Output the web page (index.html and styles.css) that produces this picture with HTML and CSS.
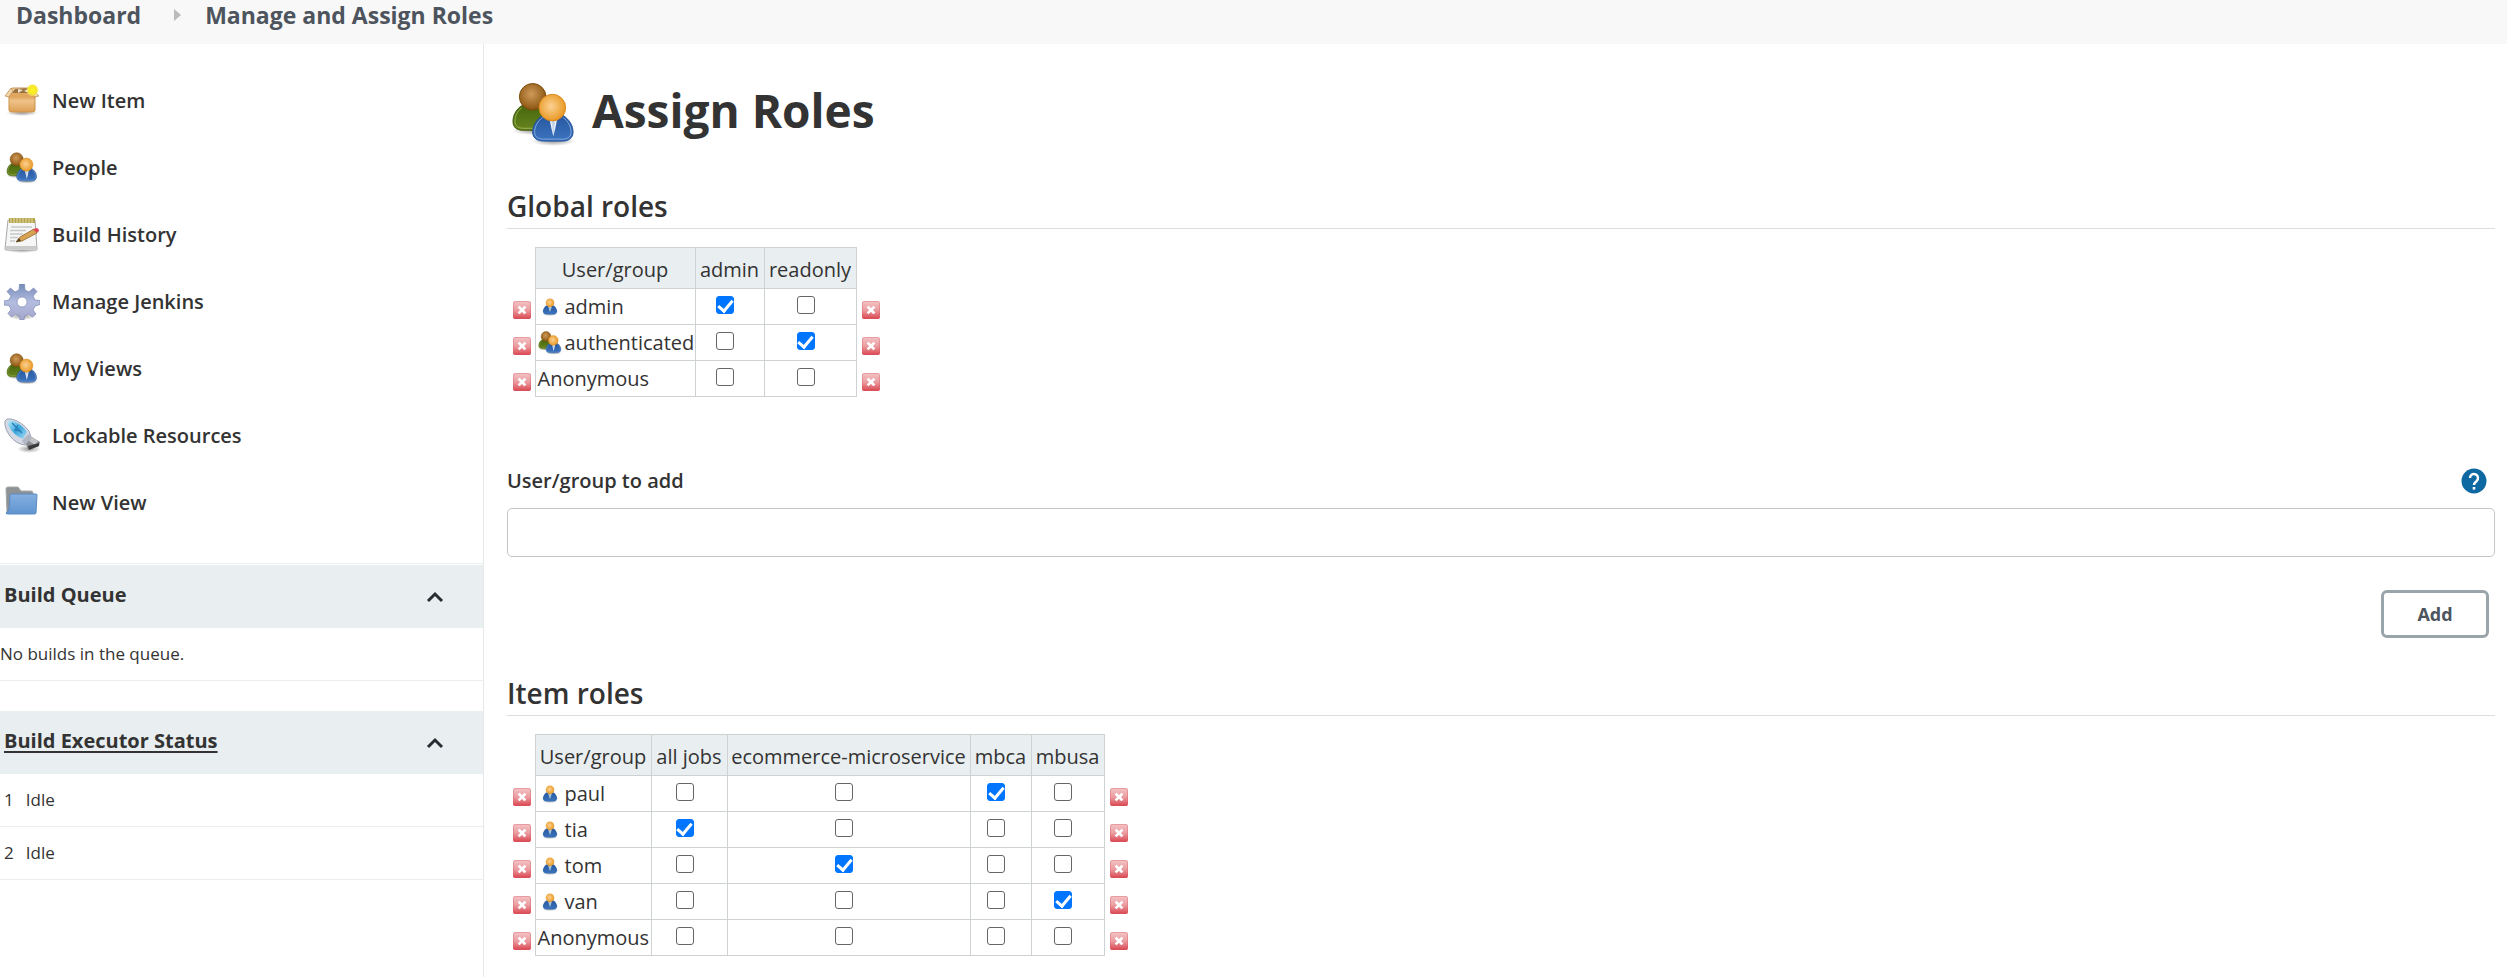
FILE: index.html
```html
<!DOCTYPE html>
<html lang="en">
<head>
<meta charset="utf-8">
<title>Assign Roles</title>
<meta name="viewport" content="width=device-width, initial-scale=1">
<link rel="stylesheet" href="styles.css">
</head>
<body>
<svg class="sprite" aria-hidden="true">
  <defs>
    <radialGradient id="g-brown" cx=".45" cy=".4" r=".6"><stop offset="0" stop-color="#cf9a58"/><stop offset="1" stop-color="#8a5410"/></radialGradient>
    <radialGradient id="g-orange" cx=".45" cy=".45" r=".6"><stop offset="0" stop-color="#fbd193"/><stop offset="1" stop-color="#e8941a"/></radialGradient>
    <linearGradient id="g-green" x1="0" y1="0" x2="0" y2="1"><stop offset="0" stop-color="#45660c"/><stop offset="1" stop-color="#67851f"/></linearGradient>
    <linearGradient id="g-blue" x1="0" y1="0" x2="0" y2="1"><stop offset="0" stop-color="#27589f"/><stop offset="1" stop-color="#3c74bf"/></linearGradient>
    <linearGradient id="g-red" x1="0" y1="0" x2="0" y2="1"><stop offset="0" stop-color="#f3c4c6"/><stop offset=".5" stop-color="#eb9da1"/><stop offset="1" stop-color="#da4550"/></linearGradient>
    <linearGradient id="g-box" x1="0" y1="0" x2="0" y2="1"><stop offset="0" stop-color="#d9a15c"/><stop offset=".35" stop-color="#efc288"/><stop offset="1" stop-color="#dc9f55"/></linearGradient>
    <linearGradient id="g-folder" x1="0" y1="0" x2="0" y2="1"><stop offset="0" stop-color="#85afe0"/><stop offset="1" stop-color="#5f94d0"/></linearGradient>
    <linearGradient id="g-gear" x1="0" y1="0" x2="0" y2="1"><stop offset="0" stop-color="#7389b8"/><stop offset=".5" stop-color="#b3bde0"/><stop offset="1" stop-color="#a5a5cc"/></linearGradient>
    <linearGradient id="g-usb" x1="0" y1="0" x2="1" y2="1"><stop offset="0" stop-color="#bcecf9"/><stop offset=".5" stop-color="#3ba6dc"/><stop offset="1" stop-color="#a9dcf3"/></linearGradient>
    <radialGradient id="g-shadow"><stop offset="0" stop-color="#000" stop-opacity=".4"/><stop offset="1" stop-color="#000" stop-opacity="0"/></radialGradient>
    <radialGradient id="g-glow"><stop offset="0" stop-color="#fff61e"/><stop offset=".7" stop-color="#f5e52e"/><stop offset="1" stop-color="#fff7a0" stop-opacity="0"/></radialGradient>
  </defs>
  <symbol id="i-people" viewBox="0 0 64 66">
    <ellipse cx="22" cy="49" rx="22" ry="5" fill="url(#g-shadow)"/>
    <path d="M10 24h23c6 6 8 12 8 18 0 5-5 7-10 7H11C5 49 1 46 1 40c0-7 4-13 9-16z" fill="url(#g-green)" stroke="#3d5909" stroke-width="1"/>
    <path d="M10 26c-5 4-7 9-7 14 0 5 4 7 8 7h12" fill="none" stroke="#9ab154" stroke-width="1"/>
    <circle cx="21" cy="15" r="13.5" fill="url(#g-brown)" stroke="#7c4b0c" stroke-width="1"/>
    <ellipse cx="42" cy="60" rx="22" ry="5" fill="url(#g-shadow)"/>
    <path d="M31 34h21c6 4 10 10 10 17 0 6-5 9-10 9H32c-6 0-11-3-11-9 0-7 4-13 10-17z" fill="url(#g-blue)" stroke="#1f4f96" stroke-width="1"/>
    <path d="M31 36c-5 4-8 9-8 15 0 5 4 7 9 7h20c5 0 8-3 8-7 0-6-3-11-8-15" fill="none" stroke="#82a9dd" stroke-width="1"/>
    <path d="M38 37h8l-2 10-2 8-2-8z" fill="#f1f5fc"/><path d="M40 39h4l-1 7-1 9-1-9z" fill="#c3d3ea"/>
    <circle cx="41" cy="26" r="13.5" fill="url(#g-orange)" stroke="#d8871a" stroke-width="1"/>
  </symbol>
  <symbol id="i-person" viewBox="0 0 32 38">
    <ellipse cx="16" cy="34" rx="16" ry="4" fill="url(#g-shadow)"/>
    <path d="M8 16h16c4 3 7 8 7 12s-3 7-7 7H8c-4 0-7-3-7-7s3-9 7-12z" fill="url(#g-blue)"/>
    <path d="M12 18h8l-4 12z" fill="#a9c4cf"/>
    <circle cx="16" cy="10" r="9" fill="url(#g-orange)"/>
  </symbol>
  <symbol id="i-box" viewBox="0 0 36 36">
    <ellipse cx="18" cy="30" rx="16" ry="3" fill="url(#g-shadow)"/>
    <path d="M8 5h20l4 6H4z" fill="#f0d2a0" stroke="#c8945a" stroke-width="1"/>
    <path d="M11 6l14-1 3 5H8z" fill="#9b7340"/><path d="M14 6l5 1-5 3zM20 8l4-2 1 4z" fill="#ece3d3"/>
    <path d="M5 12h26v15q0 2-3 2H8q-3 0-3-2z" fill="url(#g-box)" stroke="#cf9149" stroke-width="1"/>
    <path d="M4 10h28l-2 5H6z" fill="#e2a75f"/>
    <path d="M7 5L1 13l4 1 4-6zM28 6l7 7-4 1-4-5z" fill="#efd5a8" stroke="#b7874f" stroke-width=".7"/>
    <circle cx="28.500" cy="7" r="6.500" fill="url(#g-glow)"/>
  </symbol>
  <symbol id="i-notepad" viewBox="0 0 36 36">
    <ellipse cx="18" cy="33" rx="17" ry="3" fill="url(#g-shadow)"/>
    <path d="M4 3h27l2 29q0 1-1 1H2q-1 0-1-1z" fill="#f5f6f5" stroke="#a7aaa6" stroke-width="1"/>
    <path d="M2 29h30v3H2z" fill="#c9cbc8"/>
    <path d="M5 1h26v5H5z" fill="#b4a44e"/><path d="M7 1v5M10 1v5M13 1v5M16 1v5M19 1v5M22 1v5M25 1v5M28 1v5" stroke="#e2dba5" stroke-width="1"/>
    <path d="M7 10h21M6 13.500h16M6 17h13M6 20.500h8M6 24h5" stroke="#c5c7c9" stroke-width="1.300"/>
    <path d="M12 25l4-5 14-8 3 4-15 8z" fill="#d7a251" stroke="#93672c" stroke-width=".8"/>
    <path d="M12 25l3-4 2 3z" fill="#51422c"/><path d="M29 12.500l3-1.500q3 0 3 3l-2 2z" fill="#dc4b55"/>
  </symbol>
  <symbol id="i-gear" viewBox="0 0 36 36">
    <ellipse cx="18" cy="32" rx="14" ry="4" fill="url(#g-shadow)"/>
    <path fill="url(#g-gear)" stroke="#8490b9" stroke-width=".8" fill-rule="evenodd" d="M15.500 0h5l.5 6 4 2 4.500-4 3.500 3.500-4 4.500 2 4 5 .5v4l-5 1.500-2 4 3 4-3.500 3-4-3-4 2-.5 4h-4l-.5-4-4-2-4 3-3.500-3.500 3-4-2-4-5-.5v-4l5-1 2-4-4-4.500L6.500 4l4.500 4 4-2zM18 13a5 5 0 1 0 .1 0z"/>
  </symbol>
  <symbol id="i-usb" viewBox="0 0 36 36">
    <ellipse cx="25" cy="31" rx="12" ry="4" fill="url(#g-shadow)"/>
    <path d="M1 3q1-3 6-2 10 2 18 12l2 6-6 8q-9-1-15-9Q0 10 1 3z" fill="#d4d9e3" stroke="#9ba2b5" stroke-width="1"/>
    <path d="M5 2q11 2 18 12l-4 7Q9 17 4 7z" fill="url(#g-usb)"/>
    <path d="M8 5l10 10M14 7l-3 5 6 1" stroke="#247db8" stroke-width="1.300" fill="none"/>
    <path d="M18 23l6-7 4 3-6 9z" fill="#b3b7c4"/>
    <path d="M22 26l6-7 8 5-1 4-11 4z" fill="#8b8d92"/><path d="M25 23l3-4 6 4-3 4z" fill="#c3c5c8"/><path d="M24 28l11-3v3l-10 4z" fill="#3a3a3c"/>
  </symbol>
  <symbol id="i-folder" viewBox="0 0 36 36">
    <path d="M2 4q0-2 2-2h10l3 4h10q2 0 2 2v20H3z" fill="#8e9294" stroke="#a5a8a9" stroke-width="1"/>
    <path d="M6 10q0-1 1-1h25q1 0 1 1l-1 18q0 1-2 1H4q-2 0-2-1l3-3z" fill="url(#g-folder)" stroke="#5b8ac1" stroke-width="1"/>
  </symbol>
  <symbol id="i-delete" viewBox="0 0 18 18">
    <rect width="18" height="18" rx="2" fill="url(#g-red)"/><rect x=".5" y=".5" width="17" height="17" rx="2" fill="none" stroke="#d85a62" stroke-opacity=".35"/>
    <path d="M6.500 6.500l5 5M11.500 6.500l-5 5" stroke="#fff" stroke-width="2.600" stroke-linecap="square"/>
  </symbol>
  <symbol id="i-up" viewBox="0 0 18 12"><path d="M2 10l7-7 7 7" fill="none" stroke="#262d33" stroke-width="3"/></symbol>
</svg>

<nav class="breadcrumbs" aria-label="Breadcrumb">
  <a href="#">Dashboard</a>
  <svg class="crumb-arrow" viewBox="0 0 7 12" aria-hidden="true"><path d="M0 0l7 6-7 6z" fill="#b9bbbc"/></svg>
  <a href="#">Manage and Assign Roles</a>
</nav>

<div class="page">
  <aside class="side">
    <nav class="tasks" aria-label="Tasks">
      <a href="#"><svg class="task-icon"><use href="#i-box"/></svg>New Item</a>
      <a href="#"><svg class="task-icon people"><use href="#i-people"/></svg>People</a>
      <a href="#"><svg class="task-icon"><use href="#i-notepad"/></svg>Build History</a>
      <a href="#"><svg class="task-icon"><use href="#i-gear"/></svg>Manage Jenkins</a>
      <a href="#"><svg class="task-icon people"><use href="#i-people"/></svg>My Views</a>
      <a href="#"><svg class="task-icon"><use href="#i-usb"/></svg>Lockable Resources</a>
      <a href="#"><svg class="task-icon"><use href="#i-folder"/></svg>New View</a>
    </nav>
    <section class="pane queue">
      <header class="pane-head"><h2>Build Queue</h2><button class="collapse" aria-label="Collapse build queue"><svg><use href="#i-up"/></svg></button></header>
      <p class="pane-row">No builds in the queue.</p>
    </section>
    <section class="pane executors">
      <header class="pane-head"><h2><a href="#">Build Executor Status</a></h2><button class="collapse" aria-label="Collapse executor status"><svg><use href="#i-up"/></svg></button></header>
      <p class="pane-row"><span>1</span><span>Idle</span></p>
      <p class="pane-row"><span>2</span><span>Idle</span></p>
    </section>
  </aside>

  <main class="main">
    <h1><svg class="title-icon" aria-hidden="true"><use href="#i-people"/></svg><span>Assign Roles</span></h1>

    <h2 class="section-title">Global roles</h2>
    <table class="roles">
      <colgroup><col class="c-del"><col class="c-160"><col class="c-69"><col class="c-92"><col class="c-del"></colgroup>
      <thead><tr><td class="edge"></td><th>User/group</th><th>admin</th><th>readonly</th><td class="edge"></td></tr></thead>
      <tbody>
        <tr><td class="edge"><button class="del" aria-label="Remove admin"><svg><use href="#i-delete"/></svg></button></td><td><span class="who"><svg class="one"><use href="#i-person"/></svg>admin</span></td><td class="tick"><input type="checkbox" aria-label="admin: admin" checked></td><td class="tick"><input type="checkbox" aria-label="admin: readonly"></td><td class="edge"><button class="del" aria-label="Remove admin"><svg><use href="#i-delete"/></svg></button></td></tr>
        <tr><td class="edge"><button class="del" aria-label="Remove authenticated"><svg><use href="#i-delete"/></svg></button></td><td><span class="who"><svg class="group"><use href="#i-people"/></svg>authenticated</span></td><td class="tick"><input type="checkbox" aria-label="authenticated: admin"></td><td class="tick"><input type="checkbox" aria-label="authenticated: readonly" checked></td><td class="edge"><button class="del" aria-label="Remove authenticated"><svg><use href="#i-delete"/></svg></button></td></tr>
        <tr><td class="edge"><button class="del" aria-label="Remove Anonymous"><svg><use href="#i-delete"/></svg></button></td><td><span class="who">Anonymous</span></td><td class="tick"><input type="checkbox" aria-label="Anonymous: admin"></td><td class="tick"><input type="checkbox" aria-label="Anonymous: readonly"></td><td class="edge"><button class="del" aria-label="Remove Anonymous"><svg><use href="#i-delete"/></svg></button></td></tr>
      </tbody>
    </table>

    <form class="add-form">
      <div class="label-row">
        <label for="user">User/group to add</label>
        <button type="button" class="help" aria-label="Help"><svg viewBox="0 0 26 26"><circle cx="13" cy="13" r="12.500" fill="#0e68a2"/><path d="M9 10a4 4 0 1 1 6.600 3C14 14.300 13 15 13 17" fill="none" stroke="#fff" stroke-width="2.400"/><rect x="11.700" y="19" width="2.600" height="2.600" fill="#fff"/></svg></button>
      </div>
      <input type="text" id="user">
      <div class="actions"><button type="button" class="add">Add</button></div>
    </form>

    <h2 class="section-title">Item roles</h2>
    <table class="roles">
      <colgroup><col class="c-del"><col class="c-116"><col class="c-76"><col class="c-243"><col class="c-61"><col class="c-73"><col class="c-del"></colgroup>
      <thead><tr><td class="edge"></td><th>User/group</th><th>all jobs</th><th>ecommerce-microservice</th><th>mbca</th><th>mbusa</th><td class="edge"></td></tr></thead>
      <tbody>
        <tr><td class="edge"><button class="del" aria-label="Remove paul"><svg><use href="#i-delete"/></svg></button></td><td><span class="who"><svg class="one"><use href="#i-person"/></svg>paul</span></td><td class="tick"><input type="checkbox" aria-label="paul: all jobs"></td><td class="tick"><input type="checkbox" aria-label="paul: ecommerce-microservice"></td><td class="tick"><input type="checkbox" aria-label="paul: mbca" checked></td><td class="tick"><input type="checkbox" aria-label="paul: mbusa"></td><td class="edge"><button class="del" aria-label="Remove paul"><svg><use href="#i-delete"/></svg></button></td></tr>
        <tr><td class="edge"><button class="del" aria-label="Remove tia"><svg><use href="#i-delete"/></svg></button></td><td><span class="who"><svg class="one"><use href="#i-person"/></svg>tia</span></td><td class="tick"><input type="checkbox" aria-label="tia: all jobs" checked></td><td class="tick"><input type="checkbox" aria-label="tia: ecommerce-microservice"></td><td class="tick"><input type="checkbox" aria-label="tia: mbca"></td><td class="tick"><input type="checkbox" aria-label="tia: mbusa"></td><td class="edge"><button class="del" aria-label="Remove tia"><svg><use href="#i-delete"/></svg></button></td></tr>
        <tr><td class="edge"><button class="del" aria-label="Remove tom"><svg><use href="#i-delete"/></svg></button></td><td><span class="who"><svg class="one"><use href="#i-person"/></svg>tom</span></td><td class="tick"><input type="checkbox" aria-label="tom: all jobs"></td><td class="tick"><input type="checkbox" aria-label="tom: ecommerce-microservice" checked></td><td class="tick"><input type="checkbox" aria-label="tom: mbca"></td><td class="tick"><input type="checkbox" aria-label="tom: mbusa"></td><td class="edge"><button class="del" aria-label="Remove tom"><svg><use href="#i-delete"/></svg></button></td></tr>
        <tr><td class="edge"><button class="del" aria-label="Remove van"><svg><use href="#i-delete"/></svg></button></td><td><span class="who"><svg class="one"><use href="#i-person"/></svg>van</span></td><td class="tick"><input type="checkbox" aria-label="van: all jobs"></td><td class="tick"><input type="checkbox" aria-label="van: ecommerce-microservice"></td><td class="tick"><input type="checkbox" aria-label="van: mbca"></td><td class="tick"><input type="checkbox" aria-label="van: mbusa" checked></td><td class="edge"><button class="del" aria-label="Remove van"><svg><use href="#i-delete"/></svg></button></td></tr>
        <tr><td class="edge"><button class="del" aria-label="Remove Anonymous"><svg><use href="#i-delete"/></svg></button></td><td><span class="who">Anonymous</span></td><td class="tick"><input type="checkbox" aria-label="Anonymous: all jobs"></td><td class="tick"><input type="checkbox" aria-label="Anonymous: ecommerce-microservice"></td><td class="tick"><input type="checkbox" aria-label="Anonymous: mbca"></td><td class="tick"><input type="checkbox" aria-label="Anonymous: mbusa"></td><td class="edge"><button class="del" aria-label="Remove Anonymous"><svg><use href="#i-delete"/></svg></button></td></tr>
      </tbody>
    </table>
  </main>
</div>
</body>
</html>
```
FILE: styles.css
```css
* { box-sizing: border-box; }

body {
  margin: 0;
  min-height: 100vh;
  display: flex;
  flex-direction: column;
  background: #fff;
  color: #333;
  font: 20px/28px "Segoe UI", "Open Sans", "Noto Sans", sans-serif;
}

h1, h2, p { margin: 0; }
a { color: inherit; text-decoration: none; }
svg { display: block; flex: none; }
button { font: inherit; color: inherit; background: none; border: 0; padding: 0; cursor: pointer; }
.sprite { position: absolute; width: 0; height: 0; }

.breadcrumbs {
  display: flex;
  align-items: center;
  height: 44px;
  padding: 0 16px 14px;
  background: #f8f8f8;
  color: #4d545d;
  font-size: 23px;
  font-weight: 700;
}
.crumb-arrow { width: 7px; height: 12px; margin: 0 24px 0 33px; }

.page { flex: 1; display: flex; }

/* Sidebar */
.side { flex: none; width: 484px; border-right: 1px solid #e8e8e8; }
.tasks { padding-top: 23px; }
.tasks a {
  display: flex;
  align-items: center;
  gap: 12px;
  height: 67px;
  padding-left: 4px;
  font-weight: 600;
}
.task-icon { width: 36px; height: 36px; }
.task-icon.people { height: 32px; }

.pane { margin-bottom: 30px; }
.queue { margin-top: 27px; border-top: 1px solid #e9eef0; padding-top: 1px; }
.pane-head {
  display: flex;
  justify-content: space-between;
  align-items: center;
  height: 63px;
  padding: 0 39px 4px 4px;
  background: #e9eef0;
}
.pane-head h2 { font-size: 20px; line-height: 28px; font-weight: 700; }
.pane-head a { text-decoration: underline; text-decoration-thickness: 2px; text-underline-offset: 3px; }
.collapse { padding-top: 4px; }
.collapse svg { width: 18px; height: 12px; }
.pane-row {
  display: flex;
  align-items: center;
  gap: 12px;
  height: 53px;
  font-size: 17px;
  border-bottom: 1px solid #ebedee;
}
.executors .pane-row { padding-left: 4px; }

/* Content */
.main { flex: 1; min-width: 0; padding: 34px 12px 12px 23px; }
h1 {
  display: flex;
  align-items: center;
  gap: 17px;
  height: 72px;
  padding-left: 5px;
  font-size: 46px;
  line-height: 64px;
}
h1 span { padding-bottom: 8px; }
.title-icon { width: 63px; height: 65px; }
.section-title {
  padding-bottom: 4px;
  border-bottom: 1px solid #dcdfe0;
  font-size: 28px;
  line-height: 36px;
  font-weight: 600;
}
h1 + .section-title { margin-top: 38px; }

.roles { margin-top: 18px; border-collapse: collapse; }
.c-del { width: 28px; }
.c-160 { width: 160px; }
.c-69 { width: 69px; }
.c-92 { width: 92px; }
.c-116 { width: 116px; }
.c-76 { width: 76px; }
.c-243 { width: 243px; }
.c-61 { width: 61px; }
.c-73 { width: 73px; }
.roles th, .roles td { height: 36px; padding: 0; border: 1px solid #ced2d2; }
.roles th { height: 41px; padding-top: 4px; background: #e9eef0; font-weight: 400; }
.roles td.edge { border-top: 0; border-bottom: 0; padding: 6px 0 0 5px; }
.roles td.edge:first-child { border-left: 0; padding-left: 6px; }
.roles td.edge:last-child { border-right: 0; }
.del { display: block; }
.del svg { width: 18px; height: 18px; }
.who { display: flex; align-items: center; gap: 3px; padding: 0 0 0 2px; }
.who svg { width: 24px; height: 24px; }
.who .one { height: 18px; }
.roles td.tick { padding: 0 9px 4px 0; text-align: center; }
.tick input {
  appearance: none;
  display: grid;
  place-items: center;
  width: 18px;
  height: 18px;
  margin: 0 auto;
  border: 1px solid #666;
  border-radius: 3px;
  background: #fff;
}
.tick input:checked { border-color: #0075ff; background: #0075ff; }
.tick input:checked::after {
  content: "";
  width: 6px;
  height: 12px;
  margin-bottom: 3px;
  border: solid #fff;
  border-width: 0 3px 3px 0;
  transform: rotate(40deg);
}

.add-form { margin-top: 70px; margin-bottom: 37px; }
.label-row { display: flex; justify-content: space-between; align-items: center; padding-right: 8px; }
.label-row label { font-weight: 600; }
.help svg { width: 26px; height: 26px; }
.add-form input {
  display: block;
  width: 100%;
  height: 49px;
  margin-top: 13px;
  padding: 0 12px;
  border: 1px solid #c3c5c7;
  border-radius: 5px;
  font: inherit;
}
.actions { display: flex; justify-content: flex-end; padding: 33px 6px 0 0; }
.add {
  width: 108px;
  height: 48px;
  border: 3px solid #9aa5ab;
  border-radius: 6px;
  color: #4d545d;
  font-size: 18px;
  font-weight: 700;
}
```
